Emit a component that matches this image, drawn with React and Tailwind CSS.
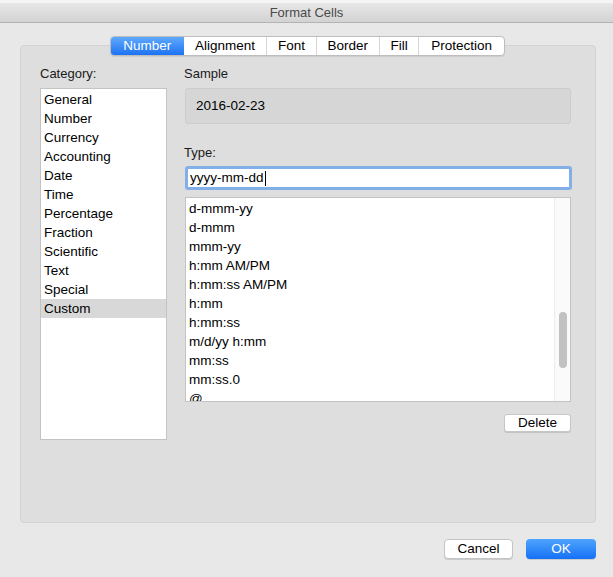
import React from 'react';

const categories = [
  'General', 'Number', 'Currency', 'Accounting', 'Date', 'Time',
  'Percentage', 'Fraction', 'Scientific', 'Text', 'Special', 'Custom',
];

const formats = [
  'd-mmm-yy', 'd-mmm', 'mmm-yy', 'h:mm AM/PM', 'h:mm:ss AM/PM', 'h:mm',
  'h:mm:ss', 'm/d/yy h:mm', 'mm:ss', 'mm:ss.0', '@',
];

const tabs = [
  { label: 'Number', w: 'w-[73px]' },
  { label: 'Alignment', w: 'w-[83px]' },
  { label: 'Font', w: 'w-[50px]' },
  { label: 'Border', w: 'w-[63px]' },
  { label: 'Fill', w: 'w-[40px]' },
  { label: 'Protection', w: 'w-[86px]' },
];

function Tabs() {
  return (
    <div className="relative z-10 flex h-[20px] ml-[110px] w-[395px] rounded-[4px] border border-[#bdbdbd] bg-white shadow-[0_1px_1px_rgba(0,0,0,0.08)] overflow-hidden">
      {tabs.map((t, i) => (
        <div
          key={t.label}
          className={
            t.w +
            ' flex items-center justify-center leading-none ' +
            (i === 0
              ? 'bg-gradient-to-b from-[#5fa9fc] to-[#1b72f2] text-white'
              : 'text-black border-l border-[#d6d6d6]') +
            (i === 1 ? ' border-l-0' : '')
          }
        >
          {t.label}
        </div>
      ))}
    </div>
  );
}

export default function App() {
  return (
    <div
      className="w-[613px] h-[577px] bg-[#e8e8e8] overflow-hidden text-[13.5px] text-black"
      style={{ fontFamily: '"Liberation Sans", Arial, sans-serif' }}
    >
      <div className="h-[3px] bg-[#f5f5f5]" />
      <div className="h-[20px] bg-gradient-to-b from-[#e7e7e7] to-[#d3d3d3] border-b border-[#b3b3b3] flex items-center justify-center text-[#4a4a4a] text-[13px]">
        Format Cells
      </div>

      <div className="pt-[13px]">
        <Tabs />

        <div className="-mt-[11px] ml-[20px] w-[576px] h-[478px] rounded-[4px] border border-[#d3d3d3] bg-[#dedede] flex pl-[19px] pt-[20px]">
          {/* left column */}
          <div className="w-[127px] flex flex-col">
            <div className="h-[16px] leading-[16px] text-[#1a1a1a] text-[13px]">Category:</div>
            <div className="mt-[6px] h-[352px] border border-[#c3c3c3] bg-white pt-[1px]">
              {categories.map((c) => (
                <div
                  key={c}
                  className={
                    'h-[19px] leading-[19px] pl-[3px] ' +
                    (c === 'Custom' ? 'bg-[#d8d8d8]' : '')
                  }
                >
                  {c}
                </div>
              ))}
            </div>
          </div>

          {/* right column */}
          <div className="ml-[17px] w-[388px] flex flex-col">
            <div className="h-[16px] leading-[16px] text-[#1a1a1a] text-[13px]">Sample</div>
            <div className="mt-[6px] ml-[1px] h-[36px] w-[386px] rounded-[3px] border border-[#cdcdcd] bg-[#d6d6d6] flex items-center pl-[10px]">
              2016-02-23
            </div>

            <div className="mt-[21px] h-[16px] leading-[16px] text-[#1a1a1a] text-[13px]">Type:</div>
            <div className="mt-[5px] ml-[1px] h-[24px] w-[387px] rounded-[3px] bg-[#83afe9] p-[3px]">
              <div className="h-full bg-white flex items-center pl-[2px]">
                yyyy-mm-dd
                <span className="ml-[1px] inline-block w-[1px] h-[15px] bg-black" />
              </div>
            </div>

            <div className="mt-[7px] ml-[1px] h-[205px] w-[386px] border border-[#c3c3c3] bg-white flex overflow-hidden">
              <div className="flex-1 pt-[1px] pl-[3px] overflow-hidden">
                {formats.map((f) => (
                  <div key={f} className="h-[19px] leading-[19px] whitespace-nowrap">
                    {f}
                  </div>
                ))}
              </div>
              <div className="w-[16px] bg-[#fafafa] border-l border-[#ececec] pt-[114px] flex justify-center">
                <div className="w-[8px] h-[56px] rounded-full bg-[#c2c2c2]" />
              </div>
            </div>

            <div className="mt-[12px] flex justify-end pr-[1px]">
              <button className="w-[67px] h-[18px] rounded-[3px] border border-[#c6c6c6] bg-white shadow-[0_1px_0_rgba(0,0,0,0.12)] leading-[16px] text-[13.5px]">
                Delete
              </button>
            </div>
          </div>
        </div>

        <div className="mt-[16px] flex justify-end gap-[13px] pr-[17px]">
          <button className="w-[69px] h-[20px] rounded-[4px] border border-[#c4c4c4] bg-white shadow-[0_1px_0_rgba(0,0,0,0.12)] leading-none text-[13.5px]">
            Cancel
          </button>
          <button className="w-[70px] h-[20px] rounded-[4px] bg-gradient-to-b from-[#4ea4fd] to-[#1470f5] text-white leading-none text-[13.5px] shadow-[0_1px_0_rgba(0,0,0,0.12)]">
            OK
          </button>
        </div>
      </div>
    </div>
  );
}
